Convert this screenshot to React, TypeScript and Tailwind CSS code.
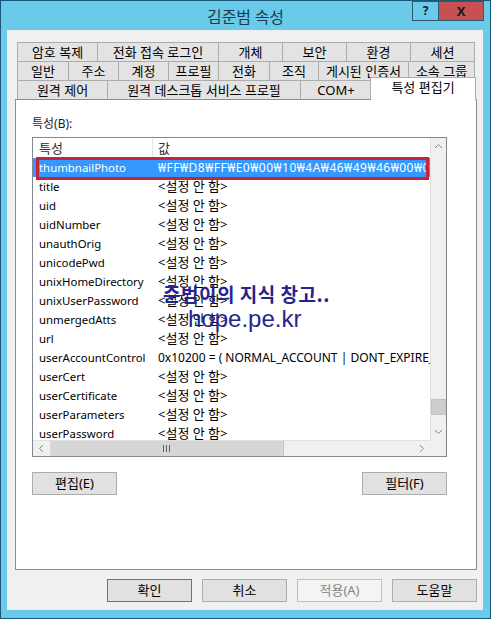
import React from "react";

const row1 = [
  { label: "암호 복제", w: "w-[81px]" },
  { label: "전화 접속 로그인", w: "w-[122px]" },
  { label: "개체", w: "w-[65px]" },
  { label: "보안", w: "w-[65px]" },
  { label: "환경", w: "w-[65px]" },
  { label: "세션", w: "w-[65px]" },
];

const row2 = [
  { label: "일반", w: "w-[52px]" },
  { label: "주소", w: "w-[51px]" },
  { label: "계정", w: "w-[51px]" },
  { label: "프로필", w: "w-[51px]" },
  { label: "전화", w: "w-[52px]" },
  { label: "조직", w: "w-[50px]" },
  { label: "게시된 인증서", w: "w-[91px]" },
  { label: "소속 그룹", w: "w-[67px]" },
];

const row3 = [
  { label: "원격 제어", w: "w-[91px]" },
  { label: "원격 데스크톱 서비스 프로필", w: "w-[194px]" },
  { label: "COM+", w: "w-[72px]" },
];

const NOT_SET = "<설정 안 함>";

const attrs: [string, string][] = [
  ["title", NOT_SET],
  ["uid", NOT_SET],
  ["uidNumber", NOT_SET],
  ["unauthOrig", NOT_SET],
  ["unicodePwd", NOT_SET],
  ["unixHomeDirectory", NOT_SET],
  ["unixUserPassword", NOT_SET],
  ["unmergedAtts", NOT_SET],
  ["url", NOT_SET],
  ["userAccountControl", "0x10200 = ( NORMAL_ACCOUNT | DONT_EXPIRE_PASSWD )"],
  ["userCert", NOT_SET],
  ["userCertificate", NOT_SET],
  ["userParameters", NOT_SET],
  ["userPassword", NOT_SET],
];

function Tab({ label, w }: { label: string; w: string }) {
  return (
    <div className={`-ml-px flex h-[19px] shrink-0 items-center justify-center border border-b-0 border-[#acacac] bg-[#e3e3e3] text-[13px] leading-none first:ml-0 ${w}`}>
      {label}
    </div>
  );
}

function Chevron({ dir }: { dir: "up" | "down" | "left" | "right" }) {
  const pts = {
    up: "1,6 4.5,2.5 8,6",
    down: "1,3 4.5,6.5 8,3",
    left: "6,1 2.5,4.5 6,8",
    right: "3,1 6.5,4.5 3,8",
  }[dir];
  return (
    <svg width="9" height="9" viewBox="0 0 9 9" fill="none">
      <polyline points={pts} stroke="#8a8a8a" strokeWidth="1" />
    </svg>
  );
}

function Button({ label, className = "" }: { label: string; className?: string }) {
  return (
    <div className={`flex h-[23px] w-[85px] items-center justify-center border text-[13px] leading-none ${className}`}>
      {label}
    </div>
  );
}

export default function App() {
  return (
    <div className="relative flex h-[619px] w-[491px] flex-col border border-[#1b5675] bg-[#6acaea] font-['Noto_Sans','Noto_Sans_CJK_KR',sans-serif] text-[12px] text-black">
      {/* title bar */}
      <div className="flex h-[29px] shrink-0 items-center justify-center pt-[1px] font-['Noto_Sans_CJK_KR',sans-serif] text-[16px] text-[#1d3a4c]">
        김준범 속성
      </div>
      <div className="absolute right-[6px] top-0 flex">
        <div className="flex h-[20px] w-[27px] items-center justify-center border border-[#2a5a74] text-[12px] font-bold leading-none text-[#1a1a1a]">
          ?
        </div>
        <div className="-ml-px flex h-[20px] w-[46px] items-center justify-center border border-[#2a5a74] bg-[#c75050] text-[13px] font-bold leading-none text-[#1a1a1a]">
          X
        </div>
      </div>

      {/* client area */}
      <div className="mb-[8px] ml-[6px] mr-[7px] flex flex-1 flex-col bg-[#f0f0f0] pl-[8px] pr-[6px] pt-[12px]">
        {/* tabs */}
        <div className="flex flex-col px-[2px]">
          <div className="flex">
            {row1.map((t) => (
              <Tab key={t.label} {...t} />
            ))}
          </div>
          <div className="flex">
            {row2.map((t) => (
              <Tab key={t.label} {...t} />
            ))}
          </div>
          <div className="flex items-end">
            {row3.map((t) => (
              <Tab key={t.label} {...t} />
            ))}
            <div className="relative z-10 -mb-px -ml-[2px] -mr-[2px] -mt-[3px] flex h-[23px] w-[106px] items-start justify-center border border-b-0 border-[#acacac] bg-white pt-[3px] text-[13px] leading-none">
              특성 편집기
            </div>
          </div>
        </div>

        {/* panel */}
        <div className="flex h-[471px] flex-col border border-[#8e8e8e] bg-white pl-[16px]">
          <div className="mt-[16px] h-[16px] leading-[16px] text-[#1a1a1a]">특성(B):</div>
          <div className="mt-[5px] flex h-[320px] w-[415px] flex-col border border-[#828790] bg-white">
            <div className="flex min-h-0 flex-1">
              <div className="relative min-w-0 flex-1 overflow-hidden">
                <div className="flex h-[20px] items-center leading-none text-[#2b2b2b]">
                  <div className="flex h-full w-[120px] items-center border-r border-[#e5e5e5] pl-[6px] text-[13px]">특성</div>
                  <div className="pl-[5px] text-[13px]">값</div>
                </div>
                <div className="flex h-[19px] items-center bg-[#3399ff] leading-none text-white">
                  <div className="w-[120px] shrink-0 pl-[6px] text-[11.4px]">thumbnailPhoto</div>
                  <div className="whitespace-nowrap pl-[5px] text-[12px] tracking-[0.5px]">₩FF₩D8₩FF₩E0₩00₩10₩4A₩46₩49₩46₩00₩01₩01</div>
                </div>
                {attrs.map(([k, v]) => (
                  <div key={k} className="flex h-[19px] items-center leading-none">
                    <div className="w-[120px] shrink-0 pl-[6px] text-[11.4px]">{k}</div>
                    <div className={`whitespace-nowrap pl-[5px] ${v === NOT_SET ? "text-[13px]" : "text-[12px]"}`}>{v}</div>
                  </div>
                ))}
                <div className="absolute left-[3px] top-[19px] h-[23px] w-[393px] border-[3px] border-[#c4253b]" />
              </div>
              {/* vertical scrollbar */}
              <div className="flex w-[16px] shrink-0 flex-col border-l border-[#e0e0e0] bg-[#f0f0f0]">
                <div className="flex h-[17px] items-center justify-center">
                  <Chevron dir="up" />
                </div>
                <div className="flex flex-1 flex-col justify-end pb-[8px]">
                  <div className="h-[16px] border border-[#c4c4c4] bg-[#cdcdcd]" />
                </div>
                <div className="flex h-[17px] items-center justify-center">
                  <Chevron dir="down" />
                </div>
              </div>
            </div>
            {/* horizontal scrollbar */}
            <div className="flex h-[16px] shrink-0">
              <div className="flex flex-1 border-t border-[#e0e0e0] bg-[#f0f0f0]">
                <div className="flex w-[17px] items-center justify-center">
                  <Chevron dir="left" />
                </div>
                <div className="flex w-[234px] items-center justify-center gap-[2px] border-r border-[#c4c4c4] bg-[#d6d6d6]">
                  <span className="h-[7px] w-px bg-[#606060]" />
                  <span className="h-[7px] w-px bg-[#606060]" />
                  <span className="h-[7px] w-px bg-[#606060]" />
                </div>
                <div className="flex-1" />
                <div className="flex w-[17px] items-center justify-center">
                  <Chevron dir="right" />
                </div>
              </div>
              <div className="w-[16px] bg-[#f0f0f0]" />
            </div>
          </div>
          <div className="mt-[15px] flex w-[415px] justify-between">
            <Button label="편집(E)" className="border-[#adadad] bg-[#e1e1e1]" />
            <Button label="필터(F)" className="border-[#adadad] bg-[#e1e1e1]" />
          </div>
        </div>

        {/* dialog buttons */}
        <div className="mt-[9px] flex justify-end gap-[10px]">
          <Button label="확인" className="border-[#3c7fb1] bg-[#e1e1e1]" />
          <Button label="취소" className="border-[#adadad] bg-[#e1e1e1]" />
          <Button label="적용(A)" className="border-[#bfbfbf] bg-[#f4f4f4] text-[#838383]" />
          <Button label="도움말" className="border-[#adadad] bg-[#e1e1e1]" />
        </div>
      </div>

      {/* watermark */}
      <div className="pointer-events-none absolute left-[162px] top-[281px] flex flex-col items-start">
        <div className="font-['Noto_Sans_CJK_KR',sans-serif] text-[19px] font-bold leading-[24px] tracking-[0.5px] text-[#25258f]">
          준범이의 지식 창고..
        </div>
        <div className="ml-[25px] font-['Liberation_Sans',sans-serif] text-[24px] leading-[26px] text-[#25258f]">
          hope.pe.kr
        </div>
      </div>
    </div>
  );
}
